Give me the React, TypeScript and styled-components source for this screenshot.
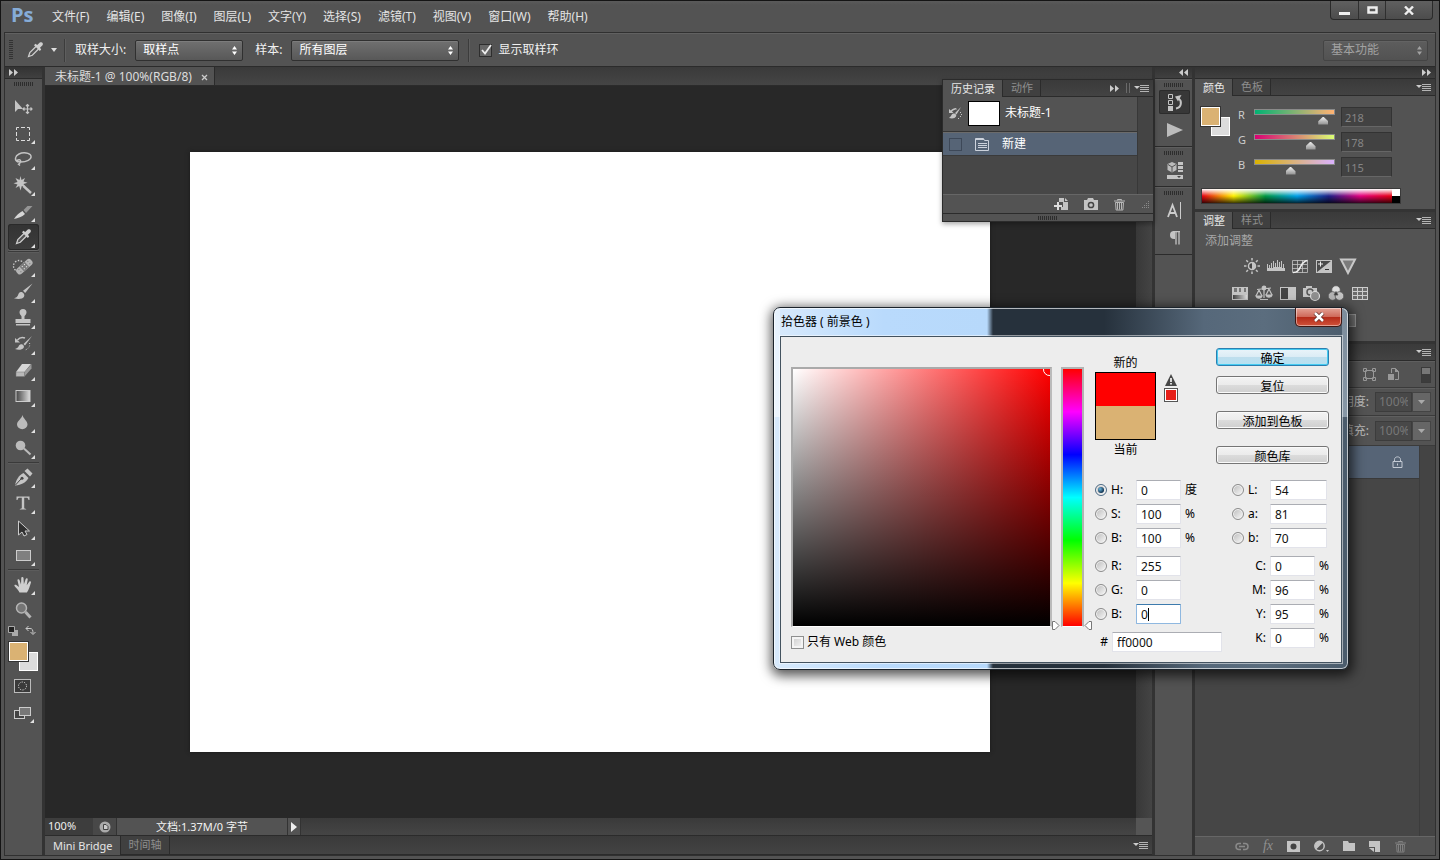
import React from 'react';
import styled, { createGlobalStyle, css } from 'styled-components';

const GlobalStyle = createGlobalStyle`
  *, *::before, *::after { box-sizing: border-box; }
  body { margin: 0; background: #535353; }
  body, button, input, select {
    font-family: "Noto Sans", "Noto Sans CJK SC", sans-serif;
    font-size: 12px;
    line-height: 16px;
  }
  button { border: 0; padding: 0; background: none; color: inherit; }
  ul { list-style: none; margin: 0; padding: 0; }
  svg { display: block; flex: none; }
`;

const EDGE = '#2b2b2b';
const CHROME = '#535353';
const ICON = '#c4c4c4';
const stripBackground = 'linear-gradient(#333, #404040)';

/* ---------- window ---------- */

const Window = styled.div`
  position: relative;
  display: flex;
  flex-direction: column;
  min-height: 100vh;
  border: 1px solid #141414;
  background: ${CHROME};
  color: #e2e2e2;
  white-space: nowrap;
`;

const MenuBar = styled.header`
  display: flex;
  justify-content: space-between;
  height: 31px;
  padding-left: 10px;
  background: linear-gradient(#5a5a5a, #535353 4px);
`;

const MenuNav = styled.nav`
  display: flex;
  align-items: center;
  gap: 17px;
`;

const Logo = styled.span`
  width: 24px;
  padding-bottom: 4px;
  color: #86acd8;
  font: bold 20px/24px "Open Sans", sans-serif;
`;

const MenuItem = styled.button`
  color: #e4e4e4;
`;

const WindowButtons = styled.div`
  display: flex;
  height: 19px;
  margin-right: 6px;
  border: 1px solid #2a2a2a;
  border-top: 0;
  border-radius: 0 0 4px 4px;
  background: linear-gradient(#606060, #4c4c4c);
`;

const WindowButton = styled.button<{ $wide?: boolean }>`
  display: grid;
  place-items: center;
  width: ${p => (p.$wide ? 47 : 27)}px;
  & + & { border-left: 1px solid #2f2f2f; }
`;

const Frame = styled.div`
  display: flex;
  flex: 1;
  flex-direction: column;
  margin: 0 3px 3px;
  border: 1px solid #303030;
`;

/* ---------- options bar ---------- */

const OptionsBar = styled.div`
  display: flex;
  align-items: center;
  height: 34px;
  padding: 0 7px 0 4px;
  border-top: 1px solid #616161;
  border-bottom: 1px solid ${EDGE};
`;

const OptionGroup = styled.div<{ $left: number }>`
  display: flex;
  align-items: center;
  margin-left: ${p => p.$left}px;
`;

const OptionText = styled.label`
  color: #f0f0f0;
`;

const Grip = styled.span<{ $vertical?: boolean }>`
  display: block;
  flex: none;
  ${p =>
    p.$vertical
      ? css`
          width: 4px;
          height: 20px;
          background: repeating-linear-gradient(#333 0 1px, transparent 1px 2px);
        `
      : css`
          width: 20px;
          height: 4px;
          margin: 3px auto;
          background: repeating-linear-gradient(90deg, #2d2d2d 0 1px, transparent 1px 2px);
        `}
`;

const Divider = styled.span`
  width: 2px;
  height: 23px;
  border-left: 1px solid #3c3c3c;
  border-right: 1px solid #5e5e5e;
`;

const SelectBox = styled.span<{ $width: number; $muted?: boolean }>`
  display: grid;
  align-items: center;
  width: ${p => p.$width}px;
  height: 21px;
  border: 1px solid ${p => (p.$muted ? '#444' : '#303030')};
  border-radius: 2px;
  background: ${p => (p.$muted ? 'linear-gradient(#5d5d5d, #525252)' : 'linear-gradient(#707070, #585858)')};
  box-shadow: inset 0 1px ${p => (p.$muted ? '#636363' : '#7c7c7c')};
  color: ${p => (p.$muted ? '#a2a2a2' : '#fff')};
  > * { grid-area: 1 / 1; }
  > svg { justify-self: end; margin-right: 4px; pointer-events: none; }
`;

const SelectField = styled.select`
  width: 100%;
  height: 19px;
  padding: 0 7px;
  border: 0;
  appearance: none;
  background: none;
  color: inherit;
`;

function Select({ id, label, width, muted, value }: { id: string; label?: string; width: number; muted?: boolean; value: string }) {
  return (
    <SelectBox $width={width} $muted={muted}>
      <SelectField id={id} aria-label={label}>
        <option>{value}</option>
      </SelectField>
      <svg width="7" height="9" viewBox="0 0 7 9" fill="currentColor">
        <path d="M1 3.5 3.5 0 6 3.5zM1 5.5 3.5 9 6 5.5z" />
      </svg>
    </SelectBox>
  );
}

const DarkCheck = styled.input`
  width: 13px;
  height: 13px;
  margin: 0 6px 0 0;
  border: 1px solid #2e2e2e;
  appearance: none;
  background: #666;
`;

const CheckWrap = styled.span`
  position: relative;
  display: flex;
  > svg { position: absolute; left: 2px; top: 0; pointer-events: none; }
`;

/* ---------- workspace ---------- */

const Workspace = styled.div`
  display: flex;
  flex: 1;
  gap: 3px;
  background: #333;
`;

const Column = styled.aside<{ $width: number }>`
  display: flex;
  flex: none;
  flex-direction: column;
  width: ${p => p.$width}px;
  background: ${CHROME};
`;

const Strip = styled.div<{ $left?: boolean }>`
  display: flex;
  align-items: center;
  justify-content: ${p => (p.$left ? 'flex-start' : 'flex-end')};
  height: 12px;
  padding: 0 4px;
  border-bottom: 1px solid ${EDGE};
  background: ${stripBackground};
`;

const ToolGrip = styled.div`
  padding-bottom: 5px;
`;

const ToolButton = styled.button<{ $active?: boolean }>`
  display: block;
  width: 31px;
  height: 26px;
  border-radius: 3px;
  ${p =>
    p.$active &&
    css`
      background: linear-gradient(#333, #3d3d3d);
      box-shadow: inset 0 0 0 1px #2a2a2a, 0 1px #686868;
    `}
`;

const ToolGroup = styled.div`
  margin: 0 3px;
  padding-bottom: 1px;
  & + & { padding-top: 1px; border-top: 1px solid #3a3a3a; box-shadow: inset 0 1px #5c5c5c; }
`;

const SwatchPair = styled.div<{ $size: number; $w: number; $h: number }>`
  display: grid;
  flex: none;
  width: ${p => p.$w}px;
  height: ${p => p.$h}px;
  > * {
    grid-area: 1 / 1;
    width: ${p => p.$size}px;
    height: ${p => p.$size}px;
    border: 1px solid #fff;
    background: #dcdcdc;
  }
  > :first-child { place-self: end; }
  > :last-child { z-index: 1; background: #dab273; box-shadow: 0 0 0 1px #333; }
`;

const MiniRow = styled.div`
  display: flex;
  justify-content: space-between;
  padding: 2px 6px 6px 3px;
`;

const SwatchPairHolder = styled.div`
  padding: 0 4px 8px;
`;

const ModeButton = styled.button`
  align-self: flex-start;
  margin: 0 0 12px 9px;
`;

/* ---------- document ---------- */

const Center = styled.main`
  position: relative;
  display: flex;
  flex: 1;
  flex-direction: column;
  min-width: 0;
`;

const TabStrip = styled.div<{ $height: number }>`
  display: flex;
  height: ${p => p.$height}px;
  border-bottom: 1px solid ${EDGE};
  background: linear-gradient(#3a3a3a, #454545);
`;

const DocTab = styled.div`
  display: flex;
  align-items: center;
  gap: 9px;
  padding: 2px 6px 0 10px;
  border-right: 1px solid ${EDGE};
  background: ${CHROME};
  color: #ddd;
`;

const Pasteboard = styled.div`
  display: flex;
  flex: 1;
  background: #282828;
`;

const CanvasArea = styled.div`
  display: grid;
  flex: 1;
  place-items: center;
  padding-right: 1px;
`;

const Paper = styled.div`
  width: 800px;
  height: 600px;
  background: #fff;
  box-shadow: 0 0 4px #1a1a1a;
`;

const VerticalScroll = styled.div`
  width: 16px;
  background: linear-gradient(90deg, #383838, #444);
`;

const StatusBar = styled.div`
  display: flex;
  height: 18px;
  border-bottom: 1px solid ${EDGE};
  background: linear-gradient(#3a3a3a, #454545);
`;

const Zoom = styled.input`
  width: 48px;
  padding: 0 3px 1px;
  border: 0;
  background: #3d3d3d;
  color: #eee;
  font-size: 11px;
`;

const StatusCell = styled.button<{ $width: number; $dark?: boolean }>`
  display: grid;
  place-items: center;
  width: ${p => p.$width}px;
  border-right: 1px solid #333;
  background: ${p => (p.$dark ? '#484848' : CHROME)};
  color: #f2f2f2;
  font-size: 11px;
`;

const ScrollCorner = styled.span`
  width: 16px;
  margin-left: auto;
  background: #555;
`;

/* ---------- panels ---------- */

const PanelTabs = styled.div<{ $height: number }>`
  display: flex;
  align-items: stretch;
  height: ${p => p.$height}px;
  border-bottom: 1px solid ${EDGE};
  background: linear-gradient(#3a3a3a, #434343);
  > svg { align-self: center; margin-right: 4px; }
`;

const PanelTab = styled.button<{ $active?: boolean }>`
  display: flex;
  align-items: center;
  margin-bottom: ${p => (p.$active ? -1 : 0)}px;
  padding: 0 7px 0 8px;
  border-right: 1px solid ${EDGE};
  background: ${p => (p.$active ? CHROME : '#404040')};
  color: ${p => (p.$active ? '#e6e6e6' : '#8e8e8e')};
  font-size: 11px;
`;

const Spacer = styled.span`
  flex: 1;
`;

const Section = styled.section<{ $height?: number; $grow?: boolean }>`
  display: flex;
  flex-direction: column;
  flex: ${p => (p.$grow ? 1 : 'none')};
  min-height: ${p => p.$height ?? 0}px;
  border-bottom: ${p => (p.$grow ? 0 : 3)}px solid #343434;
`;

const FloatingPanel = styled.section`
  position: absolute;
  top: 12px;
  right: -2px;
  width: 212px;
  border: 1px solid ${EDGE};
  background: ${CHROME};
  box-shadow: 0 2px 5px rgba(0, 0, 0, 0.35);
`;

const HistoryBody = styled.div`
  display: flex;
  height: 97px;
  background: #474747;
`;

const HistoryList = styled.ul`
  flex: 1;
  border-right: 1px solid #383838;
`;

const HistorySource = styled.li`
  display: flex;
  align-items: center;
  gap: 5px;
  height: 35px;
  padding: 0 5px 2px;
  border-bottom: 1px solid #353535;
  background: ${CHROME};
  color: #fff;
`;

const Thumb = styled.span`
  width: 32px;
  height: 25px;
  border: 1px solid #000;
  background: #fff;
`;

const HistoryState = styled.li`
  display: flex;
  align-items: center;
  height: 24px;
  padding: 0 6px;
  border-top: 1px solid #6b6b6b;
  border-bottom: 1px solid #3a3a3a;
  background: #566476;
  color: #fff;
`;

const StateBox = styled.span`
  width: 13px;
  height: 13px;
  margin-right: 13px;
  border: 1px solid #3d4858;
`;

const StateName = styled.span`
  margin-left: 12px;
`;

const ScrollGutter = styled.span`
  width: 15px;
  background: #444;
`;

const PanelFooter = styled.div<{ $gap: number; $right: number }>`
  display: flex;
  align-items: center;
  justify-content: flex-end;
  gap: ${p => p.$gap}px;
  height: 19px;
  padding-right: ${p => p.$right}px;
  border-top: 1px solid #666;
  background: ${CHROME};
`;

const GripBar = styled.div`
  height: 8px;
  border-top: 1px solid ${EDGE};
  > span { margin: 2px auto; }
`;

const DockGroup = styled.div`
  padding-bottom: 4px;
  border-bottom: 1px solid ${EDGE};
  border-top: 1px solid #5e5e5e;
`;

const DockButton = styled.button<{ $active?: boolean; $gap?: number }>`
  display: grid;
  place-items: center;
  width: 31px;
  height: 24px;
  margin: 0 4px ${p => p.$gap ?? 0}px;
  border-radius: 2px;
  background: ${p => (p.$active ? '#383838' : 'none')};
  box-shadow: ${p => (p.$active ? 'inset 0 0 0 1px #2c2c2c' : 'none')};
`;

/* ---------- colour panel ---------- */

const ColorBody = styled.div`
  display: flex;
  gap: 8px;
  height: 92px;
  padding: 11px 0 0 6px;
`;

const ChannelRow = styled.div`
  display: flex;
  height: 25px;
`;

const ChannelLabel = styled.label`
  width: 16px;
  color: #ccc;
  font-size: 11px;
`;

const ChannelSlider = styled.div<{ $gradient: string }>`
  width: 81px;
  margin: 2px 6px 0 0;
  &::before {
    content: "";
    display: block;
    height: 6px;
    border: 1px solid #8a8a8a;
    background: linear-gradient(90deg, ${p => p.$gradient});
  }
`;

const ChannelRange = styled.input`
  display: block;
  width: calc(100% + 10px);
  height: 9px;
  margin: 1px -5px 0;
  appearance: none;
  background: none;
  &::-webkit-slider-thumb {
    width: 10px;
    height: 8px;
    appearance: none;
    background: linear-gradient(#eee, #8d8d8d);
    clip-path: polygon(50% 0, 100% 60%, 100% 100%, 0 100%, 0 60%);
  }
`;

const ChannelValue = styled.input`
  width: 51px;
  height: 20px;
  padding: 0 3px;
  border: 1px solid #333;
  border-bottom-color: #666;
  background: #424242;
  color: #858585;
  font-size: 11px;
`;

const Spectrum = styled.div`
  display: flex;
  width: 200px;
  height: 16px;
  margin: 0 0 5px 6px;
  border: 1px solid #3a3a3a;
  background: linear-gradient(#fff, rgba(255, 255, 255, 0) 50%, rgba(0, 0, 0, 0) 50%, rgba(0, 0, 0, 0.75)),
    linear-gradient(90deg, #e60012, #fff100 16%, #009944 32%, #00a0e9 48%, #1d2088 64%, #e4007f 80%, #e60012 96%);
  &::after {
    content: "";
    width: 8px;
    margin-left: auto;
    background: linear-gradient(#fff 50%, #000 50%);
  }
`;

const Hint = styled.p`
  margin: 4px 10px;
  color: #a6a6a6;
`;

const AdjustRow = styled.div`
  display: flex;
  justify-content: center;
  gap: 6px;
  height: 27px;
  padding-right: 30px;
`;

/* ---------- layers panel ---------- */

const LayerRow = styled.div<{ $gap: number; $height: number }>`
  display: flex;
  align-items: center;
  justify-content: flex-end;
  gap: ${p => p.$gap}px;
  height: ${p => p.$height}px;
  padding-right: 4px;
  border-top: 1px solid #5f5f5f;
  border-bottom: 1px solid #3b3b3b;
  color: #bbb;
`;

const FilterToggle = styled.button`
  width: 10px;
  height: 16px;
  margin-left: 10px;
  border: 1px solid #3a3a3a;
  background: linear-gradient(#777 45%, #3c3c3c 45%);
`;

const PercentBox = styled.span`
  display: flex;
  width: 56px;
  height: 20px;
  margin-left: 2px;
`;

const Percent = styled.input`
  width: 37px;
  padding: 0 3px;
  border: 1px solid #3c3c3c;
  background: #484848;
  color: #777;
`;

const PercentDrop = styled.button`
  display: grid;
  place-items: center;
  width: 19px;
  border: 1px solid #444;
  background: #666;
`;

const LayerArea = styled.div`
  display: flex;
  flex: 1;
  background: #464646;
`;

const LayerList = styled.ul`
  flex: 1;
  padding-left: 2px;
  border-right: 1px solid #3c3c3c;
`;

const LayerItem = styled.li`
  display: flex;
  align-items: center;
  justify-content: flex-end;
  height: 33px;
  padding-right: 16px;
  border-bottom: 1px solid #3a3a3a;
  background: #566476;
`;

const FxLabel = styled.span`
  color: #909090;
  font: italic 14px/16px "Liberation Serif", serif;
`;

/* ---------- colour picker dialog ---------- */

const Dialog = styled.div`
  position: absolute;
  top: 306px;
  right: 90px;
  width: 576px;
  padding: 0 6px 6px;
  border: 1px solid #1b232b;
  border-radius: 7px;
  background:
    linear-gradient(rgba(255, 255, 255, 0.35), rgba(255, 255, 255, 0.55)) left top / 6px 109px no-repeat,
    linear-gradient(rgba(185, 200, 214, 0.45), rgba(185, 200, 214, 0.55)) right top / 6px 109px no-repeat,
    linear-gradient(90deg, #d8eafc, #b9dafc 110px, #b7d9fb 213px, #26313c 219px, #26313c 330px, #56687a 430px, #5b6d7e 490px, #4b5c6c);
  box-shadow: inset 0 0 0 1px rgba(255, 255, 255, 0.65), 1px 3px 12px 3px rgba(0, 0, 0, 0.65);
  color: #000;
`;

const TitleBar = styled.div`
  display: flex;
  align-items: flex-start;
  justify-content: space-between;
  height: 28px;
`;

const Title = styled.h1`
  margin: 5px 0 0;
  padding-left: 1px;
  font-size: 12px;
  font-weight: normal;
  line-height: 18px;
`;

const CloseButton = styled.button`
  display: grid;
  place-items: center;
  width: 47px;
  height: 19px;
  border: 1px solid #3f1712;
  border-top: 0;
  border-radius: 0 0 5px 5px;
  background: linear-gradient(#e3a295, #cf6a5a 48%, #b32a18 50%, #d0523a);
  box-shadow: inset 0 0 0 1px rgba(255, 255, 255, 0.45);
`;

const DialogBody = styled.form`
  display: flex;
  height: 327px;
  border: 1px solid #43525f;
  background: #ededed;
  box-shadow: 0 0 0 1px rgba(255, 255, 255, 0.5);
`;

const PickerSide = styled.div`
  padding: 30px 0 0 10px;
`;

const PickerRow = styled.div`
  display: flex;
  gap: 9px;
`;

const ColorField = styled.div`
  display: flex;
  justify-content: flex-end;
  width: 261px;
  height: 260px;
  border: 2px solid #aaa;
  border-right-color: #bbb;
  border-bottom-color: #fff;
  border-bottom-width: 1px;
  background: linear-gradient(transparent, #000), linear-gradient(90deg, #fff, #f00);
  background-clip: padding-box;
`;

const HueTrack = styled.div`
  position: relative;
  width: 23px;
  height: 260px;
  border: 2px solid #b3b3b3;
  border-bottom: 1px solid #fff;
  background: linear-gradient(#f00, #f0f, #00f, #0ff, #0f0, #ff0, #f00);
  > svg { position: absolute; left: -12px; bottom: -4px; pointer-events: none; }
`;

const HueRange = styled.input`
  width: 100%;
  height: 100%;
  margin: 0;
  appearance: none;
  writing-mode: vertical-lr;
  background: none;
  &::-webkit-slider-thumb { width: 10px; height: 4px; appearance: none; background: none; }
`;

const WebOnly = styled.label`
  display: flex;
  align-items: center;
  gap: 3px;
  margin-top: 7px;
`;

const LightCheck = styled.input`
  width: 13px;
  height: 13px;
  margin: 0;
  border: 1px solid #8e8f8f;
  appearance: none;
  background: linear-gradient(135deg, #ccc, #f6f6f6);
  box-shadow: inset 0 0 0 2px #f4f4f4;
`;

const ControlSide = styled.div`
  flex: 1;
  padding: 11px 12px 0 11px;
`;

const TopRow = styled.div`
  display: flex;
  height: 132px;
`;

const Preview = styled.div`
  display: flex;
  flex-direction: column;
  align-items: center;
  width: 61px;
  padding-top: 7px;
`;

const PreviewSwatch = styled.div`
  width: 61px;
  height: 68px;
  margin: 1px 0 2px;
  border: 1px solid #000;
  background: linear-gradient(#f00 50%, #dab273 50%);
`;

const Gamut = styled.div`
  display: flex;
  flex-direction: column;
  align-items: center;
  gap: 2px;
  width: 14px;
  margin: 26px 38px 0 8px;
`;

const GamutSwatch = styled.button`
  width: 14px;
  height: 14px;
  border: 1px solid #555;
  background: #e7201a;
  box-shadow: inset 0 0 0 1px #fff;
`;

const Buttons = styled.div`
  display: flex;
  flex: 1;
  flex-direction: column;
`;

const DialogButton = styled.button<{ $primary?: boolean; $gap?: number }>`
  height: 18px;
  margin-bottom: ${p => p.$gap ?? 0}px;
  padding-top: 2px;
  border: 1px solid ${p => (p.$primary ? '#2c7fb0' : '#757575')};
  border-radius: 3px;
  background: ${p =>
    p.$primary ? 'linear-gradient(#eaf4fa, #dbecf5 50%, #bfdeed 50%, #b5e2f2)' : 'linear-gradient(#f3f3f3, #ebebeb 50%, #dcdcdc 50%, #cfcfcf)'};
  box-shadow: inset 0 0 0 1px ${p => (p.$primary ? '#45cbf1' : '#fafafa')};
  line-height: 16px;
`;

const ValueRow = styled.div`
  display: flex;
  justify-content: space-between;
  margin-right: -5px;
`;

const ValueColumn = styled.div<{ $right?: boolean }>`
  display: flex;
  flex-direction: column;
  align-items: ${p => (p.$right ? 'flex-end' : 'flex-start')};
`;

const ValueLine = styled.div<{ $after?: number }>`
  display: flex;
  align-items: center;
  height: 20px;
  margin-bottom: ${p => p.$after ?? 4}px;
`;

const Radio = styled.input`
  display: grid;
  place-items: center;
  width: 12px;
  height: 12px;
  margin: 0 4px 0 0;
  border: 1px solid #8c8c8c;
  border-radius: 50%;
  appearance: none;
  background: linear-gradient(135deg, #bbb, #fafafa);
  box-shadow: inset 0 0 0 1px #f2f2f2;
  &:checked { border-color: #4c6a85; }
  &:checked::after {
    content: "";
    width: 6px;
    height: 6px;
    border-radius: 50%;
    background: radial-gradient(circle at 35% 35%, #69b7e0, #10314f 70%);
  }
`;

const ValueLabel = styled.label<{ $width: number; $end?: boolean }>`
  width: ${p => p.$width}px;
  text-align: ${p => (p.$end ? 'right' : 'left')};
  padding-right: ${p => (p.$end ? 4 : 0)}px;
`;

const ValueInput = styled.input<{ $width: number; $focus?: boolean }>`
  width: ${p => p.$width}px;
  height: 20px;
  padding: 1px 4px 0;
  border: 1px solid ${p => (p.$focus ? '#8fb8e0' : '#e2e3ea')};
  border-top-color: ${p => (p.$focus ? '#3d7bad' : '#abadb3')};
  border-radius: 1px;
  outline: 0;
  background: #fff;
  color: #111;
`;

const InputWrap = styled.span`
  position: relative;
  display: flex;
`;

const Caret = styled.i`
  position: absolute;
  left: 12px;
  top: 4px;
  width: 1px;
  height: 13px;
  background: #000;
`;

const Unit = styled.span`
  width: 15px;
  margin-left: 4px;
`;

const LabGroup = styled.div`
  margin-right: 7px;
`;

/* ---------- icons ---------- */

const DoubleArrow = ({ back }: { back?: boolean }) => (
  <svg width="9" height="7" viewBox="0 0 9 7" fill="#ccc">
    {back ? <path d="M4 0v7L0 3.5zM9 0v7L5 3.5z" /> : <path d="M0 0v7l4-3.5zM5 0v7l4-3.5z" />}
  </svg>
);

const MenuGlyph = () => (
  <svg width="15" height="9" viewBox="0 0 15 9">
    <path d="M0 2h6L3 5z" fill="#ccc" />
    <path d="M6 1.500h9M6 3.500h9M6 5.500h9M6 7.500h9" stroke="#b4b4b4" />
  </svg>
);

const dropper = (
  <g>
    <path d="M16 9.5 9.8 15.7l-1.3 3.8 3.8-1.3L18.5 12" fill="#555" stroke="#d0d0d0" strokeWidth="1.2" />
    <path d="m14 8.2 1.4-1.4 1.8 1.2 2.6-2.4c2-1.4 4 .6 2.7 2.6L20 10.8l1.2 1.8-1.4 1.4z" fill="#cfcfcf" />
  </g>
);

const trash = (color: string) => (
  <svg width="13" height="13" viewBox="0 0 13 13" fill="none" stroke={color}>
    <path d="M1 3h11M4.5 2.5v-1h4v1M2.5 4.5l.6 7.5h6.8l.6-7.5zM4.500 5v6.500M6.500 5v6.500M8.500 5v6.500" />
  </svg>
);

const tools: { name: string; art: React.ReactNode; plain?: boolean }[][] = [
  [
    {
      name: '移动工具',
      plain: true,
      art: (
        <g>
          <path d="M7 6v12l3-3h5z" fill={ICON} />
          <path d="M19.500 10.500v9M15 15h9M18 12l1.500-1.500L21 12M18 18l1.500 1.500L21 18M16.500 13.500 15 15l1.500 1.500M22.500 13.500 24 15l-1.500 1.500" fill="none" stroke={ICON} strokeWidth="1.200" />
        </g>
      ),
    },
    { name: '矩形选框工具', art: <path d="M8.500 10V7.500H11M13 7.500h4M19 7.500h2.500V10M21.500 12v4M21.500 18v2.500H19M17 20.500h-4M11 20.500H8.500V18M8.500 16v-4" fill="none" stroke="#ddd" /> },
    { name: '套索工具', art: <path d="M10 16c-4-2-3-6 1-8s11-1.500 12 2-5 6-10 6c-4 0-5-1-3-2s4 1 2 3l-1.500 1.200L12 19.500" fill="none" stroke={ICON} strokeWidth="1.400" /> },
    {
      name: '魔棒工具',
      art: (
        <g>
          <path d="m12.500 4 1 4 3.500-2-1.500 3.500 4 1.200-4 1.300 2 3.500-3.700-1.500-1.300 4.500-1.300-4.500L7.500 16l2-3.500-4-1.300 4-1.200L7.500 6l4 2z" fill={ICON} />
          <path d="m15.500 14 7.500 7" stroke={ICON} strokeWidth="2.400" />
        </g>
      ),
    },
    {
      name: '切片工具',
      art: (
        <g>
          <path d="M6 21c2-3.500 5.500-6.500 8.500-8l2.500 3c-3 3-7 4-11 5z" fill="#d6d6d6" />
          <path d="m15.500 12 4-4h5L18 15z" fill="#959595" />
        </g>
      ),
    },
    { name: '吸管工具', art: dropper },
  ],
  [
    {
      name: '污点修复画笔工具',
      art: (
        <g>
          <circle cx="11" cy="13" r="5.500" fill="none" stroke="#ccc" strokeWidth="1.300" strokeDasharray="1.500 1.500" />
          <g transform="rotate(-42 16 14)">
            <rect x="7" y="10.500" width="19" height="7" rx="3" fill="#b4b4b4" />
            <rect x="13" y="10.500" width="7" height="7" fill="#7c7c7c" />
            <path d="M14.500 12.500h1M17.500 12.500h1M14.500 15.500h1M17.500 15.500h1" stroke="#eee" />
            <path d="M10 12.500h1M10 15.500h1M22 12.500h1M22 15.500h1" stroke="#777" />
          </g>
        </g>
      ),
    },
    {
      name: '画笔工具',
      art: (
        <g>
          <path d="m24.500 4.500-9.500 7.200 2.200 2.300z" fill={ICON} />
          <path d="M14.300 13.200c-3-.8-3.600 1.400-4.300 3-.6 1.500-2 2.500-4 3 4 1.200 8.700.9 10-1.500.8-1.500.3-3.300-1.700-4.500z" fill={ICON} />
        </g>
      ),
    },
    {
      name: '仿制图章工具',
      art: <path d="M13.500 14v-2.500c0-1-2-2-2-4a3.500 3.500 0 0 1 7 0c0 2-2 3-2 4V14h6v4h-15v-4zM8 19h14v1.500H8z" fill={ICON} />,
    },
    {
      name: '历史记录画笔工具',
      art: (
        <g>
          <path d="m24 5-8.500 8 1.500 1.500zM14.500 13.500c-2.500-1-3.500 1-4 2s-2 2-3.500 2.500c3 1.200 7 1 8.500-1 .9-1.300.5-2.500-1-3.500z" fill={ICON} />
          <path d="M9.500 9c2-2.500 5-3 7.500-2" fill="none" stroke={ICON} strokeWidth="1.500" />
          <path d="M7 7v4.500h5z" fill={ICON} />
          <path d="M21.500 12c1 3-1 6-4.500 7" fill="none" stroke={ICON} strokeDasharray="1 1.500" />
        </g>
      ),
    },
    {
      name: '橡皮擦工具',
      art: (
        <g>
          <path d="m8 15 6-8h9l-6.500 8z" fill="#d6d6d6" />
          <path d="M16.500 15 23.500 7v4.500l-7 8z" fill="#9a9a9a" />
          <path d="M8 15h8.500v4.500H8z" fill="#b9b9b9" stroke="#777" strokeWidth=".5" />
        </g>
      ),
    },
    { name: '渐变工具', art: <rect x="8" y="7.500" width="14" height="11" fill="url(#toolGradient)" stroke="#ccc" /> },
    { name: '模糊工具', art: <path d="M14.500 6c1 4 5 6 5 9.500a5 4.500 0 0 1-10.500 0C9 12 13.500 10 14.500 6z" fill="#bbb" /> },
    {
      name: '减淡工具',
      art: (
        <g>
          <circle cx="12.500" cy="10.500" r="4.800" fill="#bbb" />
          <path d="m16 13.500 6.500 6" stroke="#bbb" strokeWidth="2" />
        </g>
      ),
    },
  ],
  [
    {
      name: '钢笔工具',
      art: (
        <g>
          <path d="M7 21.500C8 16 10.500 11.500 15.500 9l5 5c-2.500 4.500-7 7-13.500 7.500z" fill={ICON} />
          <path d="m7.500 21 5.500-6" stroke="#444" />
          <circle cx="14" cy="14.300" r="1.500" fill="#444" />
          <path d="m16.500 7 3-2.500 5 5L22 12.500z" fill={ICON} />
        </g>
      ),
    },
    { name: '横排文字工具', art: <path d="M8.500 6.500h13V10h-1c-.3-1.700-.8-2.300-2.500-2.300h-1.800v9.800c0 1 .5 1.300 2 1.400v.6h-6.400v-.6c1.500-.1 2-.4 2-1.400V7.700H12c-1.700 0-2.200.6-2.500 2.300h-1z" fill={ICON} /> },
    { name: '路径选择工具', art: <path d="M10.500 5v14l3.500-3 2 4 3-1.500-2-3.500h4.500z" fill="#303030" stroke="#ccc" /> },
    { name: '矩形工具', art: <rect x="8.500" y="8.500" width="14" height="10" fill="#808080" stroke="#ccc" /> },
  ],
  [
    {
      name: '抓手工具',
      art: <path d="M11.500 21.500c-1-2.500-3.500-4.500-5-6.500-.5-1 .8-1.700 1.800-1L11 16 9.500 9.500c-.2-1.600 1.500-1.800 2-.4l1.500 4.400L13.300 7c.1-1.400 2-1.400 2.200 0l.4 6.300L17.700 8c.5-1.300 2.200-.8 2 .6l-1 5.700 2.500-3.500c.8-1.100 2.200-.2 1.700 1-1.100 3-1.900 7-4 9.700z" fill="#cfcfcf" />,
    },
    {
      name: '缩放工具',
      plain: true,
      art: (
        <g>
          <circle cx="13.500" cy="11" r="5" fill="#757575" stroke="#b5b5b5" strokeWidth="1.500" />
          <path d="m17.500 15 5 5.500" stroke="#b5b5b5" strokeWidth="3" />
        </g>
      ),
    },
  ],
];

const adjustments: { name: string; art: React.ReactNode }[][] = [
  [
    {
      name: '亮度/对比度',
      art: (
        <g>
          <circle cx="9" cy="8" r="3.500" fill="#444" stroke={ICON} strokeWidth="1.500" />
          <path d="M9 4.500a3.500 3.500 0 0 1 0 7z" fill={ICON} />
          <path d="M9 0v2.500M9 13.500V16M1 8h2.500M14.500 8H17M3.300 2.300 5 4M13 12l1.700 1.700M3.300 13.700 5 12M13 4l1.700-1.700" stroke={ICON} strokeWidth="1.500" />
        </g>
      ),
    },
    { name: '色阶', art: <path d="M0 13V6h1v4h1V7h1v3h1V5h1v5h1V3h1v6h1V5h1v4h1V2h1v7h1V4h1v5h1V3h1v7h1V6h1v4h1v3z" fill={ICON} /> },
    {
      name: '曲线',
      art: (
        <g fill="none" stroke={ICON}>
          <path d="M1.500 2.500h15v12h-15zM6.500 2v13M11.500 2v13M1 6.500h15M1 10.500h15" strokeWidth=".8" />
          <path d="M2 14.500c9 0 6-11 14.500-12" stroke="#eee" strokeWidth="1.500" />
        </g>
      ),
    },
    {
      name: '曝光度',
      art: (
        <g>
          <rect x="1.500" y="2.500" width="15" height="12" fill="#4a4a4a" stroke={ICON} />
          <path d="M16.500 2.500v12h-15z" fill={ICON} />
          <path d="M3 6h5M5.500 3.500v5" stroke="#eee" />
          <path d="M10 11.500h4" stroke="#333" />
        </g>
      ),
    },
    { name: '自然饱和度', art: <path d="M2 1.500h14L9 15z" fill="#7b7b7b" stroke="#c8c8c8" strokeWidth="2" /> },
  ],
  [
    {
      name: '色相/饱和度',
      art: (
        <g>
          <rect x="1" y="2" width="16" height="13" fill={ICON} />
          <path d="M3 3h3v4H3zM8 3h2v4H8zM13 3h2v4h-2z" fill="#777" />
          <path d="M2 10h14v4H2z" fill="url(#toolGradient)" />
        </g>
      ),
    },
    {
      name: '色彩平衡',
      art: (
        <g fill="none" stroke={ICON} strokeWidth="1.200">
          <path d="M9 1v12M2 4.500 16 3M5 14.500h8M1 11 4 5l3 6M11 10l3-6 3 6" />
          <path d="M1 11h6c-1 3-5 3-6 0zM11 10h6c-1 3-5 3-6 0z" fill={ICON} />
          <circle cx="9" cy="3" r="1.800" fill={ICON} />
        </g>
      ),
    },
    {
      name: '黑白',
      art: (
        <g>
          <rect x="1.500" y="2.500" width="15" height="12" fill="#444" stroke={ICON} />
          <path d="M9 3h7v11H9z" fill={ICON} />
        </g>
      ),
    },
    {
      name: '照片滤镜',
      art: (
        <g>
          <path d="M0 3h3V1h6v2h5v9H0z" fill={ICON} />
          <circle cx="7" cy="7" r="3" fill="none" stroke="#555" strokeWidth="1.500" />
          <circle cx="12" cy="11" r="4.500" fill="#8f8f8f" stroke="#ddd" strokeWidth="1.200" />
        </g>
      ),
    },
    {
      name: '通道混合器',
      art: (
        <g stroke="#555" strokeWidth=".8">
          <circle cx="9" cy="5" r="4.300" fill="#ddd" />
          <circle cx="5.500" cy="11" r="4.300" fill="#b4b4b4" />
          <circle cx="12.500" cy="11" r="4.300" fill="#c4c4c4" />
          <path d="M9 6.500 11 10H7z" fill="#333" />
        </g>
      ),
    },
    {
      name: '颜色查找',
      art: (
        <g fill="none" stroke="#ccc">
          <rect x="1.500" y="2.500" width="15" height="12" fill="#6a6a6a" />
          <path d="M6.500 2v13M11.500 2v13M1 6.500h15M1 10.500h15" />
        </g>
      ),
    },
  ],
  ['反相', '色调分离', '阈值', '可选颜色', '渐变映射'].map(name => ({
    name,
    art: <rect x="1.500" y="2.500" width="15" height="12" fill="#777" stroke="#999" />,
  })),
];

const channels = [
  { name: 'R', value: 218, gradient: '#00b273, #d0b273 80%, #ffb273' },
  { name: 'G', value: 178, gradient: '#da0073, #dab273 70%, #daff73' },
  { name: 'B', value: 115, gradient: '#dab200, #dab273 45%, #dab2ff' },
];

/* ---------- parts ---------- */

function Toolbox() {
  return (
    <Column $width={37}>
      <Strip $left><DoubleArrow /></Strip>
      <ToolGrip><Grip /></ToolGrip>
      {tools.map((group, i) => (
        <ToolGroup key={i}>
          {group.map(tool => (
            <ToolButton key={tool.name} $active={tool.name === '吸管工具'} aria-label={tool.name}>
              <svg width="31" height="26" viewBox="0 0 31 26">
                {tool.art}
                {!tool.plain && <path d="M27 20v4h-4z" fill="#e0e0e0" />}
              </svg>
            </ToolButton>
          ))}
        </ToolGroup>
      ))}
      <MiniRow>
        <svg width="10" height="10" viewBox="0 0 10 10">
          <path d="M4 4h6v6H4z" fill="#aaa" />
          <path d="M.5.5h6v6h-6z" fill="#222" stroke="#aaa" />
        </svg>
        <svg width="11" height="10" viewBox="0 0 11 10" fill="none" stroke="#ccc">
          <path d="M1 2.500h4c2.500 0 3 1.500 3 5M3.500 0 1 2.500 3.500 5M5.500 6 8 8.500 10.500 6" />
        </svg>
      </MiniRow>
      <SwatchPairHolder>
        <SwatchPair $size={19} $w={29} $h={29}><span /><span /></SwatchPair>
      </SwatchPairHolder>
      <ModeButton aria-label="以快速蒙版模式编辑">
        <svg width="17" height="14" viewBox="0 0 17 14">
          <rect x=".5" y=".5" width="16" height="13" fill="#3a3a3a" stroke="#bbb" />
          <circle cx="8.500" cy="7" r="4" fill="none" stroke="#ddd" strokeDasharray="1.200 1.300" />
        </svg>
      </ModeButton>
      <ModeButton aria-label="更改屏幕模式">
        <svg width="21" height="18" viewBox="0 0 21 18" stroke="#ccc">
          <rect x="0.500" y="5.500" width="10" height="8" fill="#444" />
          <rect x="5.500" y="2.500" width="11" height="8" fill="#777" />
          <path d="M20 14v4h-4z" fill="#e0e0e0" stroke="none" />
        </svg>
      </ModeButton>
    </Column>
  );
}

const menus = ['文件(F)', '编辑(E)', '图像(I)', '图层(L)', '文字(Y)', '选择(S)', '滤镜(T)', '视图(V)', '窗口(W)', '帮助(H)'];

function HistoryPanel() {
  return (
    <FloatingPanel>
      <PanelTabs $height={17}>
        <PanelTab $active>历史记录</PanelTab>
        <PanelTab>动作</PanelTab>
        <Spacer />
        <DoubleArrow />
        <svg width="7" height="10" viewBox="0 0 7 10" stroke="#6a6a6a"><path d="M3.500 0v10M6.500 0v10" /></svg>
        <MenuGlyph />
      </PanelTabs>
      <HistoryBody>
        <HistoryList>
          <HistorySource>
            <svg width="15" height="14" viewBox="0 0 15 14" fill={ICON}>
              <path d="m13 1-6 6 1.500 1.500zM6.500 7.500C4 7 3.500 9 3 10l-2 2c3 .8 6 .5 7-1.500.7-1.400 0-2.500-1.500-3zM1 3v4h4.500L4 5.500C5.500 4 7 3.500 9 3.500L8 2C6 2 4 3 2.800 4.500z" />
              <path d="M12 6h1v1h-1zM13 8h1v1h-1zM12 10h1v1h-1zM10 12h1v1h-1z" />
            </svg>
            <Thumb />
            未标题-1
          </HistorySource>
          <HistoryState>
            <StateBox />
            <svg width="15" height="15" viewBox="0 0 15 15" fill="none" stroke="#ccd2dc">
              <path d="M.5 13.500v-12h8l1 2h4v10zM1 2.500h8M3 6.500h9M3 8.500h9M3 10.500h9" />
            </svg>
            <StateName>新建</StateName>
          </HistoryState>
        </HistoryList>
        <ScrollGutter />
      </HistoryBody>
      <PanelFooter $gap={14} $right={2}>
        <svg width="16" height="13" viewBox="0 0 16 13">
          <path d="M6 0h5v4h4v8H8V9h2V4H6z" fill={ICON} />
          <path d="M12 0v3h3z" fill={ICON} />
          <path d="M5 4v8M1 8h8" stroke="#ddd" strokeWidth="2" />
        </svg>
        <svg width="16" height="12" viewBox="0 0 16 12">
          <path d="M1 2h3l1-2h5l1 2h4v10H1z" fill={ICON} />
          <circle cx="8" cy="7" r="2.600" fill="none" stroke="#444" strokeWidth="1.500" />
        </svg>
        {trash('#b8b8b8')}
        <svg width="11" height="10" viewBox="0 0 11 10" stroke="#8a8a8a" strokeDasharray="1 1">
          <path d="M8 2.500h2M6 4.500h4M4 6.500h6M2 8.500h8" />
        </svg>
      </PanelFooter>
      <GripBar><Grip /></GripBar>
    </FloatingPanel>
  );
}

function Dock() {
  return (
    <Column $width={37}>
      <Strip><DoubleArrow back /></Strip>
      <DockGroup>
        <Grip />
        <DockButton $active $gap={4} aria-label="历史记录">
          <svg width="16" height="17" viewBox="0 0 16 17" fill="none" stroke={ICON}>
            <path d="M1.500.5h4v4h-4zM1.500 6.500h4v4h-4z" />
            <path d="M1 12h5v5H1z" fill={ICON} stroke="none" />
            <path d="M9 14.500c6-1 6-8 2.500-10" strokeWidth="2" />
            <path d="M8 2.500 14.500 1 11 7.500z" fill={ICON} stroke="none" />
          </svg>
        </DockButton>
        <DockButton aria-label="动作">
          <svg width="16" height="14" viewBox="0 0 16 14"><path d="M0 0v14l16-7z" fill="#bbb" /></svg>
        </DockButton>
      </DockGroup>
      <DockGroup>
        <Grip />
        <DockButton aria-label="属性">
          <svg width="16" height="17" viewBox="0 0 16 17">
            <path d="m5 0 4.500 2v6L5 10.500.5 8V2z" fill="#bbb" />
            <path d="M1 2.500 5 5l4-2.500M5 5v5" fill="none" stroke="#555" />
            <path d="M11 0h5v3h-5zM11 4h5v3h-5zM11 8h5v2h-5zM0 13h16v4H0z" fill={ICON} />
            <path d="M10 14h4l-2 2z" fill="#444" />
          </svg>
        </DockButton>
      </DockGroup>
      <DockGroup>
        <Grip />
        <DockButton $gap={4} aria-label="字符">
          <svg width="16" height="17" viewBox="0 0 16 17" fill="none" stroke="#ccc">
            <path d="m1 15 4.500-12L10 15M2.500 11h6" strokeWidth="1.800" />
            <path d="M13.500 0v17" />
          </svg>
        </DockButton>
        <DockButton aria-label="段落">
          <svg width="13" height="14" viewBox="0 0 13 14">
            <path d="M6 0a4 4 0 0 0 0 8h1V0z" fill={ICON} />
            <path d="M5 .500h7M8 0v13.500M11 0v13.500" stroke={ICON} strokeWidth="1.300" />
          </svg>
        </DockButton>
      </DockGroup>
    </Column>
  );
}

function PercentField({ id, label }: { id: string; label: string }) {
  return (
    <>
      <label htmlFor={id}>{label}:</label>
      <PercentBox>
        <Percent id={id} defaultValue="100%" />
        <PercentDrop aria-label={label}>
          <svg width="7" height="4" viewBox="0 0 7 4"><path d="M0 0h7L3.500 4z" fill="#aaa" /></svg>
        </PercentDrop>
      </PercentBox>
    </>
  );
}

function Panels() {
  return (
    <Column $width={240}>
      <Strip><DoubleArrow /></Strip>
      <Section $height={132}>
        <PanelTabs $height={17}>
          <PanelTab $active>颜色</PanelTab>
          <PanelTab>色板</PanelTab>
          <Spacer />
          <MenuGlyph />
        </PanelTabs>
        <ColorBody>
          <SwatchPair $size={19} $w={29} $h={29}><span /><span /></SwatchPair>
          <div>
            {channels.map(c => (
              <ChannelRow key={c.name}>
                <ChannelLabel htmlFor={`channel-${c.name}`}>{c.name}</ChannelLabel>
                <ChannelSlider $gradient={c.gradient}>
                  <ChannelRange type="range" min={0} max={255} defaultValue={c.value} aria-label={`${c.name} slider`} />
                </ChannelSlider>
                <ChannelValue id={`channel-${c.name}`} defaultValue={c.value} />
              </ChannelRow>
            ))}
          </div>
        </ColorBody>
        <Spectrum />
      </Section>
      <Section $height={132}>
        <PanelTabs $height={17}>
          <PanelTab $active>调整</PanelTab>
          <PanelTab>样式</PanelTab>
          <Spacer />
          <MenuGlyph />
        </PanelTabs>
        <Hint>添加调整</Hint>
        {adjustments.map((row, i) => (
          <AdjustRow key={i}>
            {row.map(a => (
              <button key={a.name} aria-label={a.name}>
                <svg width="18" height="17" viewBox="0 0 18 17">{a.art}</svg>
              </button>
            ))}
          </AdjustRow>
        ))}
      </Section>
      <Section $grow>
        <PanelTabs $height={17}>
          <Spacer />
          <MenuGlyph />
        </PanelTabs>
        <LayerRow $gap={11} $height={27}>
          <svg width="13" height="13" viewBox="0 0 13 13" fill="none" stroke="#999">
            <path d="M2.500 2.500h8v8h-8zM.5.5h3v3h-3zM9.500.5h3v3h-3zM.5 9.500h3v3h-3zM9.500 9.500h3v3h-3z" />
          </svg>
          <svg width="13" height="13" viewBox="0 0 13 13">
            <path d="M4.500 5V.5h4l3 3v8H8" fill="none" stroke="#999" />
            <path d="M1 6h6v6H1zM8 0v4h4z" fill="#999" />
          </svg>
          <FilterToggle aria-label="图层过滤" />
        </LayerRow>
        <LayerRow $gap={4} $height={28}><PercentField id="opacity" label="不透明度" /></LayerRow>
        <LayerRow $gap={4} $height={30}><PercentField id="fill" label="填充" /></LayerRow>
        <LayerArea>
          <LayerList>
            <LayerItem>
              <svg width="11" height="13" viewBox="0 0 11 13" fill="none" stroke="#c4cad4">
                <path d="M1 5.500h9v6H1zM2.500 5V3.500c0-3.500 6-3.500 6 0V5M5.500 7.500v2" />
              </svg>
            </LayerItem>
          </LayerList>
          <ScrollGutter />
        </LayerArea>
        <PanelFooter $gap={14} $right={28}>
          <svg width="14" height="9" viewBox="0 0 14 9" fill="none" stroke="#8a8a8a" strokeWidth="1.500">
            <path d="M6 1.500H4a3 3 0 0 0 0 6h2M8 1.500h2a3 3 0 0 1 0 6H8M4 4.500h6" />
          </svg>
          <FxLabel>fx</FxLabel>
          <svg width="13" height="11" viewBox="0 0 13 11">
            <path d="M0 0h13v11H0z" fill={ICON} />
            <circle cx="6.500" cy="5.500" r="3" fill="#444" />
          </svg>
          <svg width="15" height="13" viewBox="0 0 15 13">
            <circle cx="5.500" cy="6" r="4.700" fill="#505050" stroke={ICON} strokeWidth="1.500" />
            <path d="M2.300 9.300A4.500 4.500 0 0 1 8.700 2.700z" fill={ICON} />
            <path d="M12 10h3l-1.500 2z" fill={ICON} />
          </svg>
          <svg width="12" height="10" viewBox="0 0 12 10"><path d="M0 0h5l1 2h6v8H0z" fill={ICON} /></svg>
          <svg width="11" height="11" viewBox="0 0 11 11"><path d="M0 0h11v11H6V6H0zM0 7h5v4z" fill={ICON} /></svg>
          {trash('#808080')}
        </PanelFooter>
      </Section>
    </Column>
  );
}

function RadioValue({ id, label, value, unit, width = 45, after, checked, focus, gap = 25 }: {
  id: string; label: string; value: string; unit?: string; width?: number; after?: number; checked?: boolean; focus?: boolean; gap?: number;
}) {
  return (
    <ValueLine $after={after}>
      <Radio type="radio" name="component" defaultChecked={checked} aria-label={label} />
      <ValueLabel htmlFor={id} $width={gap}>{label}</ValueLabel>
      <InputWrap>
        <ValueInput id={id} $width={width} $focus={focus} defaultValue={value} />
        {focus && <Caret />}
      </InputWrap>
      {unit && <Unit>{unit}</Unit>}
    </ValueLine>
  );
}

function ColorPicker() {
  return (
    <Dialog role="dialog" aria-labelledby="picker-title">
      <TitleBar>
        <Title id="picker-title">拾色器 ( 前景色 )</Title>
        <CloseButton aria-label="关闭">
          <svg width="12" height="10" viewBox="0 0 12 10">
            <path d="m2 1 8 8M10 1 2 9" stroke="#5d2a24" strokeWidth="4" />
            <path d="m2 1 8 8M10 1 2 9" stroke="#fff" strokeWidth="2.500" />
          </svg>
        </CloseButton>
      </TitleBar>
      <DialogBody>
        <PickerSide>
          <PickerRow>
            <ColorField>
              <svg width="8" height="8" viewBox="0 0 8 8" fill="none" stroke="#fff"><path d="M1.500 0A6 6 0 0 0 8 6.500" /></svg>
            </ColorField>
            <HueTrack>
              <HueRange type="range" min={0} max={360} defaultValue={360} aria-label="色相" />
              <svg width="42" height="9" viewBox="0 0 42 9" fill="#fff" stroke="#777">
                <path d="M1.500.5h2.500L8 4.500 4 8.500H1.500zM40.500.5H38l-4 4 4 4h2.500z" />
              </svg>
            </HueTrack>
          </PickerRow>
          <WebOnly><LightCheck type="checkbox" />只有 Web 颜色</WebOnly>
        </PickerSide>
        <ControlSide>
          <TopRow>
            <Preview>
              新的
              <PreviewSwatch />
              当前
            </Preview>
            <Gamut>
              <svg width="12" height="12" viewBox="0 0 12 12">
                <path d="m6 0 6 12H0z" fill="#484848" />
                <path d="M6 4v4M6 9v1.500" stroke="#fff" strokeWidth="1.600" />
              </svg>
              <GamutSwatch type="button" aria-label="溢色警告" />
            </Gamut>
            <Buttons>
              <DialogButton type="button" $primary $gap={10}>确定</DialogButton>
              <DialogButton type="button" $gap={17}>复位</DialogButton>
              <DialogButton type="button" $gap={17}>添加到色板</DialogButton>
              <DialogButton type="button">颜色库</DialogButton>
            </Buttons>
          </TopRow>
          <ValueRow>
            <ValueColumn>
              <RadioValue id="hue" label="H:" value="0" unit="度" checked />
              <RadioValue id="sat" label="S:" value="100" unit="%" />
              <RadioValue id="bri" label="B:" value="100" unit="%" after={8} />
              <RadioValue id="red" label="R:" value="255" />
              <RadioValue id="green" label="G:" value="0" />
              <RadioValue id="blue" label="B:" value="0" focus after={8} />
              <ValueLine>
                <ValueLabel htmlFor="hex" $width={17} $end>#</ValueLabel>
                <ValueInput id="hex" $width={110} defaultValue="ff0000" />
              </ValueLine>
            </ValueColumn>
            <ValueColumn $right>
              <LabGroup>
                <RadioValue id="labL" label="L:" value="54" width={57} gap={22} />
                <RadioValue id="labA" label="a:" value="81" width={57} gap={22} />
                <RadioValue id="labB" label="b:" value="70" width={57} gap={22} after={8} />
              </LabGroup>
              {[['C:', '0'], ['M:', '96'], ['Y:', '95'], ['K:', '0']].map(([label, value]) => (
                <ValueLine key={label}>
                  <ValueLabel htmlFor={`ink-${label}`} $width={30} $end>{label}</ValueLabel>
                  <ValueInput id={`ink-${label}`} $width={45} defaultValue={value} />
                  <Unit>%</Unit>
                </ValueLine>
              ))}
            </ValueColumn>
          </ValueRow>
        </ControlSide>
      </DialogBody>
    </Dialog>
  );
}

const Defs = styled.svg`
  position: absolute;
`;

export default function App() {
  return (
    <Window>
      <GlobalStyle />
      <Defs width="0" height="0">
        <defs>
          <linearGradient id="toolGradient">
            <stop offset="0" stopColor="#444" />
            <stop offset="1" stopColor="#ddd" />
          </linearGradient>
        </defs>
      </Defs>
      <MenuBar>
        <MenuNav>
          <Logo>Ps</Logo>
          {menus.map(m => <MenuItem key={m}>{m}</MenuItem>)}
        </MenuNav>
        <WindowButtons>
          <WindowButton aria-label="最小化">
            <svg width="11" height="9" viewBox="0 0 11 9"><path d="M0 6h11v3H0z" fill="#eee" /></svg>
          </WindowButton>
          <WindowButton aria-label="最大化">
            <svg width="11" height="8" viewBox="0 0 11 8"><path d="M1.500 1.500h8v5h-8z" fill="none" stroke="#eee" strokeWidth="2.500" /></svg>
          </WindowButton>
          <WindowButton $wide aria-label="关闭">
            <svg width="10" height="9" viewBox="0 0 10 9"><path d="m1 .5 8 8M9 .5l-8 8" stroke="#eee" strokeWidth="2.400" /></svg>
          </WindowButton>
        </WindowButtons>
      </MenuBar>
      <Frame>
        <OptionsBar>
          <Grip $vertical />
          <OptionGroup $left={7}>
            <svg width="31" height="26" viewBox="0 0 31 26">{dropper}</svg>
            <svg width="6" height="4" viewBox="0 0 6 4"><path d="M0 0h6L3 4z" fill="#ddd" /></svg>
          </OptionGroup>
          <OptionGroup $left={7}><Divider /></OptionGroup>
          <OptionGroup $left={9}>
            <OptionText htmlFor="sample-size">取样大小:</OptionText>
          </OptionGroup>
          <OptionGroup $left={9}>
            <Select id="sample-size" width={108} value="取样点" />
          </OptionGroup>
          <OptionGroup $left={12}>
            <OptionText htmlFor="sample-layers">样本:</OptionText>
          </OptionGroup>
          <OptionGroup $left={9}>
            <Select id="sample-layers" width={168} value="所有图层" />
          </OptionGroup>
          <OptionGroup $left={9}><Divider /></OptionGroup>
          <OptionGroup $left={9}>
            <CheckWrap>
              <DarkCheck id="ring" type="checkbox" defaultChecked />
              <svg width="12" height="11" viewBox="0 0 12 11"><path d="m1 6 3 3.500L10 1" fill="none" stroke="#eee" strokeWidth="1.800" /></svg>
            </CheckWrap>
            <OptionText htmlFor="ring">显示取样环</OptionText>
          </OptionGroup>
          <Spacer />
          <Select id="workspace" label="工作区" width={105} muted value="基本功能" />
        </OptionsBar>
        <Workspace>
          <Toolbox />
          <Center>
            <TabStrip $height={19}>
              <DocTab>
                未标题-1 @ 100%(RGB/8)
                <button aria-label="关闭文档">
                  <svg width="7" height="7" viewBox="0 0 7 7"><path d="m1 1 5 5M6 1 1 6" stroke="#ccc" strokeWidth="1.300" /></svg>
                </button>
              </DocTab>
            </TabStrip>
            <Pasteboard>
              <CanvasArea><Paper /></CanvasArea>
              <VerticalScroll />
            </Pasteboard>
            <StatusBar>
              <Zoom aria-label="缩放" defaultValue="100%" />
              <StatusCell $width={24} $dark aria-label="版本">
                <svg width="12" height="12" viewBox="0 0 12 12">
                  <circle cx="6" cy="6" r="5.500" fill="#aaa" />
                  <path d="M4.500 3.500h2.500l2 2v3h-4.500z" fill="#ccc" stroke="#444" />
                </svg>
              </StatusCell>
              <StatusCell $width={171}>文档:1.37M/0 字节</StatusCell>
              <StatusCell $width={13} aria-label="状态栏选项">
                <svg width="6" height="10" viewBox="0 0 6 10"><path d="M0 0v10l6-5z" fill="#eee" /></svg>
              </StatusCell>
              <ScrollCorner />
            </StatusBar>
            <PanelTabs $height={19}>
              <PanelTab $active>Mini Bridge</PanelTab>
              <PanelTab>时间轴</PanelTab>
              <Spacer />
              <MenuGlyph />
            </PanelTabs>
            <HistoryPanel />
          </Center>
          <Dock />
          <Panels />
        </Workspace>
      </Frame>
      <ColorPicker />
    </Window>
  );
}
